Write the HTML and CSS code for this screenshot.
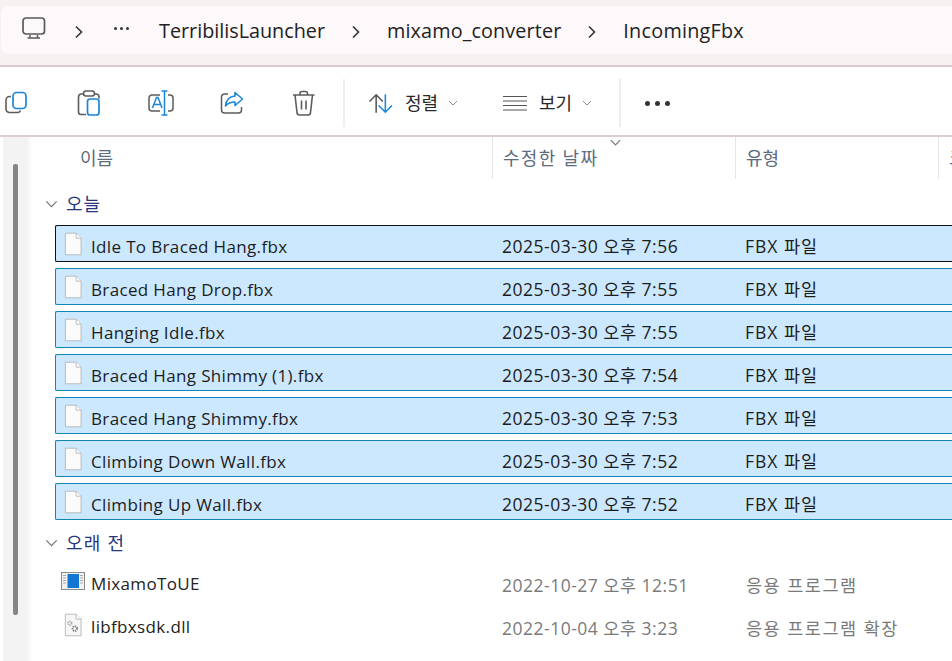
FILE: index.html
```html
<!DOCTYPE html>
<html lang="ko">
<head>
<meta charset="utf-8">
<title>IncomingFbx</title>
<link rel="stylesheet" href="styles.css">
</head>
<body>
<svg class="defs" width="0" height="0" aria-hidden="true">
  <defs>
    <symbol id="file" viewBox="0 0 20 26">
      <path d="M1.5 1h12l5.500 5.500v18.500h-17.500z" fill="#fbfbfb" stroke="#b4b4b4"/>
      <path d="M13.500 1v5.500h5.500" fill="#fff" stroke="#b4b4b4"/>
    </symbol>
    <symbol id="chev" viewBox="0 0 10 6">
      <path d="M1 1l4 4 4-4" fill="none" stroke="currentColor" stroke-width="1"/>
    </symbol>
    <symbol id="crumb" viewBox="0 0 10 14">
      <path d="M2 1.500l5.500 5.500-5.500 5.500" fill="none" stroke="#333" stroke-width="1.600"/>
    </symbol>
  </defs>
</svg>

<header class="address-area">
  <nav class="address-bar">
    <svg class="pc-icon" viewBox="0 0 24 24" width="24" height="24">
      <rect x="1" y="1" width="21.500" height="16" rx="3" fill="none" stroke="#5a5a5a" stroke-width="1.700"/>
      <path d="M8 18v2.500M15.500 18v2.500M5.500 21h12.500" fill="none" stroke="#5a5a5a" stroke-width="1.500"/>
    </svg>
    <svg class="crumb first"><use href="#crumb"/></svg>
    <span class="more-crumb"><i></i><i></i><i></i></span>
    <span class="crumb-text terribilis">TerribilisLauncher</span>
    <svg class="crumb"><use href="#crumb"/></svg>
    <span class="crumb-text mixamo">mixamo_converter</span>
    <svg class="crumb"><use href="#crumb"/></svg>
    <span class="crumb-text last">IncomingFbx</span>
  </nav>
</header>

<section class="toolbar">
  <div class="tool-group">
    <svg class="tool copy" viewBox="0 0 24 24" width="24" height="24">
      <path d="M6 5.500h-1.500a3.500 3.500 0 0 0-3.500 3.500v9a3.500 3.500 0 0 0 3.500 3.500h8.500a3 3 0 0 0 2.500-2" fill="none" stroke="#5c5c5c" stroke-width="1.600"/>
      <rect x="8" y="1.500" width="13" height="16" rx="3.500" fill="none" stroke="#1a86d9" stroke-width="1.700"/>
    </svg>
    <svg class="tool paste" viewBox="0 0 24 26" width="24" height="26">
      <path d="M6 4h-1.500a3 3 0 0 0-3 3v15a2.500 2.500 0 0 0 2.500 2.500h5M18 4h1a3 3 0 0 1 3 3v1.500" fill="none" stroke="#5c5c5c" stroke-width="1.600"/>
      <rect x="6.500" y="1" width="11" height="5" rx="2.500" fill="none" stroke="#5c5c5c" stroke-width="1.500"/>
      <rect x="10.500" y="9" width="11.500" height="16" rx="2.500" fill="none" stroke="#1a86d9" stroke-width="1.700"/>
    </svg>
    <svg class="tool rename" viewBox="0 0 26 26" width="26" height="26">
      <path d="M12 5h-8a3 3 0 0 0-3 3v10a3 3 0 0 0 3 3h8M20 5h2a3 3 0 0 1 3 3v10a3 3 0 0 1-3 3h-2" fill="none" stroke="#5c5c5c" stroke-width="1.500"/>
      <path d="M4.500 18l4-10.500h1.500l4 10.500M6 14.500h6.500" fill="none" stroke="#1a86d9" stroke-width="1.500"/>
      <path d="M13.500 1h6M16.500 1v24M13.500 25h6" fill="none" stroke="#1a86d9" stroke-width="1.500"/>
    </svg>
    <svg class="tool share" viewBox="0 0 24 24" width="24" height="24">
      <path d="M8 3h-3.500a3 3 0 0 0-3 3v13a3 3 0 0 0 3 3h14a3 3 0 0 0 3-3v-3" fill="none" stroke="#5c5c5c" stroke-width="1.500"/>
      <path d="M15 1.500l7.500 6.500-7.500 6.500v-3.500c-4 0-7 1-9.500 4 .5-5.500 4-9.500 9.500-10z" fill="none" stroke="#1a86d9" stroke-width="1.600" stroke-linejoin="round"/>
    </svg>
    <svg class="tool trash" viewBox="0 0 24 26" width="24" height="26">
      <path d="M1 5h21.500M8 5v-1.500a2 2 0 0 1 2-2h3.500a2 2 0 0 1 2 2v1.500M3 5l2 17.500a2.500 2.500 0 0 0 2.500 2.500h8.500a2.500 2.500 0 0 0 2.500-2.500l2-17.500M9.500 10.500v9M14 10.500v9" fill="none" stroke="#5c5c5c" stroke-width="1.600"/>
    </svg>
  </div>
  <div class="tool-sep"></div>
  <div class="menu-btn sort">
    <svg class="menu-icon" viewBox="1 0 23.500 20" width="24" height="21">
      <path d="M8 19v-17M1.500 8l6.500-6.500 6.500 6.500" fill="none" stroke="#555" stroke-width="1.500"/>
      <path d="M17 1v17M10.500 12l6.500 6.500 6.500-6.500" fill="none" stroke="#1a86d9" stroke-width="1.500"/>
    </svg>
    <span class="menu-label">정렬</span>
    <svg class="menu-chev"><use href="#chev"/></svg>
  </div>
  <div class="menu-btn view">
    <svg class="menu-icon" viewBox="0 0 24 16" width="24" height="16">
      <path d="M0 1.500h24M0 6h24M0 10.500h24M0 15h24" fill="none" stroke="#555" stroke-width="1.200"/>
    </svg>
    <span class="menu-label">보기</span>
    <svg class="menu-chev"><use href="#chev"/></svg>
  </div>
  <div class="tool-sep"></div>
  <div class="more-dots"><i></i><i></i><i></i></div>
</section>

<main class="content">
  <aside class="side-track"><div class="side-thumb"></div></aside>
  <div class="list">
    <div class="col-head">
      <div class="col name">이름</div>
      <div class="col date">수정한 날짜<svg class="sort-arrow"><use href="#chev"/></svg></div>
      <div class="col type">유형</div>
      <div class="col size">크</div>
    </div>

    <div class="group today"><svg class="group-chev"><use href="#chev"/></svg>오늘</div>
    <div class="rows selected">
      <div class="row sel focus"><svg class="f"><use href="#file"/></svg><span class="n">Idle To Braced Hang.fbx</span><span class="d">2025-03-30 오후 7:56</span><span class="t">FBX 파일</span></div>
      <div class="row sel"><svg class="f"><use href="#file"/></svg><span class="n">Braced Hang Drop.fbx</span><span class="d">2025-03-30 오후 7:55</span><span class="t">FBX 파일</span></div>
      <div class="row sel"><svg class="f"><use href="#file"/></svg><span class="n">Hanging Idle.fbx</span><span class="d">2025-03-30 오후 7:55</span><span class="t">FBX 파일</span></div>
      <div class="row sel"><svg class="f"><use href="#file"/></svg><span class="n">Braced Hang Shimmy (1).fbx</span><span class="d">2025-03-30 오후 7:54</span><span class="t">FBX 파일</span></div>
      <div class="row sel"><svg class="f"><use href="#file"/></svg><span class="n">Braced Hang Shimmy.fbx</span><span class="d">2025-03-30 오후 7:53</span><span class="t">FBX 파일</span></div>
      <div class="row sel"><svg class="f"><use href="#file"/></svg><span class="n">Climbing Down Wall.fbx</span><span class="d">2025-03-30 오후 7:52</span><span class="t">FBX 파일</span></div>
      <div class="row sel"><svg class="f"><use href="#file"/></svg><span class="n">Climbing Up Wall.fbx</span><span class="d">2025-03-30 오후 7:52</span><span class="t">FBX 파일</span></div>
    </div>

    <div class="group older"><svg class="group-chev"><use href="#chev"/></svg>오래 전</div>
    <div class="rows">
      <div class="row plain">
        <svg class="app" viewBox="0 0 24 18" width="24" height="18">
          <rect x="0.500" y="0.500" width="23" height="17" fill="#f2f2f2" stroke="#8a8a8a"/>
          <path d="M2 3.500h3M2 6h3M2 8.500h3M2 11h3M19 3.500h3M19 6h3M19 8.500h3M19 11h3" stroke="#a9a9a9"/>
          <rect x="6.500" y="2" width="11.500" height="14" fill="#1276d2"/>
        </svg>
        <span class="n">MixamoToUE</span><span class="d">2022-10-27 오후 12:51</span><span class="t">응용 프로그램</span>
      </div>
      <div class="row plain">
        <svg class="dll" viewBox="0 0 20 26" width="18" height="24">
          <path d="M1.500 1h12l5.500 5.500v18.500h-17.500z" fill="#f6f6f6" stroke="#b4b4b4"/>
          <path d="M13.500 1v5.500h5.500" fill="#fff" stroke="#b4b4b4"/>
          <circle cx="6.500" cy="11" r="2" fill="none" stroke="#a8a8a8" stroke-width="2" stroke-dasharray="1.200 .8"/>
          <circle cx="12" cy="17" r="2.500" fill="none" stroke="#777" stroke-width="2" stroke-dasharray="1.300 .8"/>
        </svg>
        <span class="n">libfbxsdk.dll</span><span class="d">2022-10-04 오후 3:23</span><span class="t">응용 프로그램 확장</span>
      </div>
    </div>
  </div>
</main>
</body>
</html>
```
FILE: styles.css
```css
* { box-sizing: border-box; }
html, body { margin: 0; padding: 0; }
body {
  width: 952px;
  height: 661px;
  overflow: hidden;
  background: #fff;
  font-family: "Open Sans", "Noto Sans CJK KR", sans-serif;
  color: #1c1c1c;
}
.defs { position: absolute; }

.address-area {
  height: 67px;
  padding-top: 6px;
  background: #f7f2f1;
  border-bottom: 2px solid #d9c9cd;
}
.address-bar {
  height: 48px;
  margin-left: 1px;
  display: flex;
  align-items: center;
  padding-left: 21px;
  background: #fdf8f9;
  border-radius: 7px 0 0 7px;
  font-size: 19.800px;
}
.pc-icon { flex: none; margin-bottom: 2px; }
.crumb { flex: none; width: 10px; height: 14px; margin: 3px 26px 0 0; }
.crumb.first { margin-left: 28px; margin-right: 0; }
.more-crumb { display: flex; gap: 3px; flex: none; width: 18px; margin-left: 30px; margin-bottom: 3px; }
.more-crumb i { display: block; width: 3px; height: 3px; border-radius: 50%; background: #333; }
.crumb-text { margin-right: 26px; padding-top: 2px; color: #222; white-space: nowrap; line-height: 1; }
.crumb-text.mixamo { letter-spacing: 0.120px; }
.crumb-text.last { letter-spacing: 0.250px; }
.terribilis { margin-left: 27px; }

.toolbar {
  height: 70px;
  display: flex;
  align-items: center;
  padding-top: 4px;
  border-bottom: 2px solid #dccdd1;
}
.tool-group { display: flex; align-items: center; width: 343px; padding-left: 5px; flex: none; }
.tool { flex: none; }
.copy { margin-right: 48px; }
.paste { margin-right: 47px; }
.rename { margin-right: 46px; }
.share { margin-right: 48px; }
.tool-sep { flex: none; width: 2px; height: 48px; background: #eeeeee; }
.menu-btn { display: flex; align-items: center; flex: none; }
.sort { width: 158px; padding-left: 24px; }
.view { width: 116px; }
.menu-icon { flex: none; }
.menu-label { font-size: 18px; margin-left: 12px; color: #2a2a2a; line-height: 1; }
.menu-chev { flex: none; width: 10px; height: 6px; margin-left: 10px; color: #8a8a8a; }
.more-dots { display: flex; gap: 5px; margin-left: 24px; }
.more-dots i { display: block; width: 5px; height: 5px; border-radius: 50%; background: #333; }

.content { display: flex; height: 524px; }
.side-track {
  flex: none;
  width: 28px;
  margin-left: 3px;
  padding: 27px 0 0 10px;
  background: #f3f3f3;
  border-right: 3px solid #f9f9f9;
}
.side-thumb { width: 5px; height: 451px; background: #858585; border-radius: 2px; }

.list { flex: 1; min-width: 0; }
.col-head {
  display: grid;
  grid-template-columns: 462px 243px 203px 20px;
  height: 42px;
  color: #5d6b7e;
  font-size: 18px;
}
.col { border-right: 1px solid #e6e6e6; padding: 8px 0 0 49px; white-space: nowrap; position: relative; line-height: 26px; }
.col.date { padding-left: 10px; letter-spacing: 1.300px; }
.col.type { padding-left: 10px; }
.col.size { padding-left: 10px; border: 0; overflow: hidden; }
.sort-arrow { position: absolute; left: 116px; top: 2px; width: 13px; height: 7px; color: #777; }

.group { display: flex; align-items: center; color: #25357e; font-size: 18px; line-height: 24px; padding-left: 14px; letter-spacing: 1px; }
.group.today { height: 46px; padding-top: 4px; }
.group.older { height: 45px; letter-spacing: 1.200px; }
.group-chev { flex: none; width: 13px; height: 8px; margin-right: 8px; color: #777; }

.rows { display: flex; flex-direction: column; gap: 7px; }
.rows.selected { gap: 6px; }
.row {
  display: grid;
  grid-template-columns: 35px 411px 243px 1fr;
  align-items: center;
  height: 36px;
  margin-left: 24px;
  font-size: 17px;
  white-space: nowrap;
}
.row.sel {
  height: 37px;
  background: #cce8ff;
  border: 1px solid #0f86b8;
  border-right: 0;
  border-radius: 2px 0 0 2px;
}
.row.focus { border-color: #111; }
.row.plain { grid-template-columns: 36px 411px 244px 1fr; color: #7a7a7a; }
.row.plain .n { color: #222; padding-top: 1px; }
.row.plain .d { padding-top: 2px; letter-spacing: 0.500px; }
.row.plain .t { padding-top: 2px; letter-spacing: 1.500px; }
.f { width: 18px; height: 24px; margin: 0 0 0 8px; }
.app { margin: -4px 0 0 6px; }
.dll { margin: -2px 0 0 9px; }
.n { color: #1c1c1c; letter-spacing: 0.350px; padding-top: 5px; }
.d { font-size: 17.500px; letter-spacing: 0.500px; padding-top: 3px; }
.t { font-size: 17.500px; letter-spacing: 1px; padding-top: 3px; }
```
